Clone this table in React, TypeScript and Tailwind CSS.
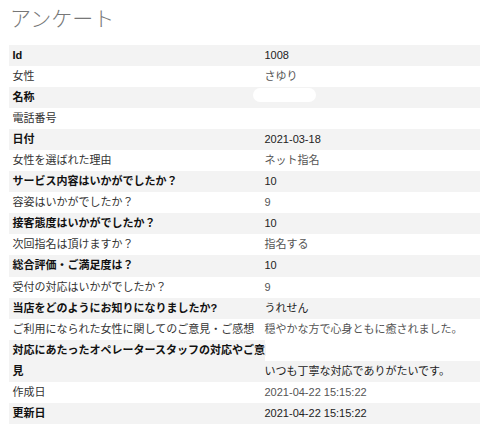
import React from "react";

type Row = { label: React.ReactNode; value: string; tall?: boolean; redact?: boolean };

const rows: Row[] = [
  { label: "Id", value: "1008" },
  { label: "女性", value: "さゆり" },
  { label: "名称", value: "", redact: true },
  { label: "電話番号", value: "" },
  { label: "日付", value: "2021-03-18" },
  { label: "女性を選ばれた理由", value: "ネット指名" },
  { label: "サービス内容はいかがでしたか？", value: "10" },
  { label: "容姿はいかがでしたか？", value: "9" },
  { label: "接客態度はいかがでしたか？", value: "10" },
  { label: "次回指名は頂けますか？", value: "指名する" },
  { label: "総合評価・ご満足度は？", value: "10" },
  { label: "受付の対応はいかがでしたか？", value: "9" },
  { label: "当店をどのようにお知りになりましたか?", value: "うれせん" },
  { label: "ご利用になられた女性に関してのご意見・ご感想", value: "穏やかな方で心身ともに癒されました。" },
  { label: "", value: "いつも丁寧な対応でありがたいです。", tall: true },
  { label: "作成日", value: "2021-04-22 15:15:22" },
  { label: "更新日", value: "2021-04-22 15:15:22" },
];

export default function App() {
  return (
    <div
      className="w-[480px] h-[428px] overflow-hidden bg-white pl-[9px]"
      style={{ fontFamily: '"Liberation Sans", "Noto Sans CJK JP", sans-serif' }}
    >
      <div className="pt-[8px] h-[45px]">
        <div className="text-[21px] leading-[21px] font-light text-[#777] pl-[1px]">アンケート</div>
      </div>
      <div className="text-[11px] leading-[21.05px]">
        {rows.map((r, i) => {
          const gray = i % 2 === 0;
          const bg = gray ? "bg-[#f3f3f3]" : "bg-white";
          const labelCls = gray ? "font-bold text-[#111]" : "font-normal text-[#333]";
          const valCls = gray ? "text-[#222]" : "text-[#555]";
          if (r.tall) {
            return (
              <div key={i} className="flex items-end">
                <div className={`w-[255.5px] shrink-0 pl-[3.5px] ${bg} ${labelCls} whitespace-nowrap`}>
                  <div>
                    <span className="bg-[#f3f3f3] pr-[1px]">対応にあたったオペレータースタッフの対応やご意</span>
                  </div>
                  <div>見</div>
                </div>
                <div className={`flex-1 h-[21.05px] ${bg} ${valCls} whitespace-nowrap`}>{r.value}</div>
              </div>
            );
          }
          return (
            <div key={i} className={`relative flex h-[21.05px] ${bg}`}>
              <div className={`w-[255.5px] shrink-0 pl-[3.5px] ${labelCls} whitespace-nowrap`}>{r.label}</div>
              <div className={`flex-1 ${valCls} whitespace-nowrap`}>{r.value}</div>
              {r.redact && (
                <div className="absolute left-[244px] top-[0.5px] w-[63px] h-[14.5px] rounded-full bg-white" />
              )}
            </div>
          );
        })}
      </div>
    </div>
  );
}
